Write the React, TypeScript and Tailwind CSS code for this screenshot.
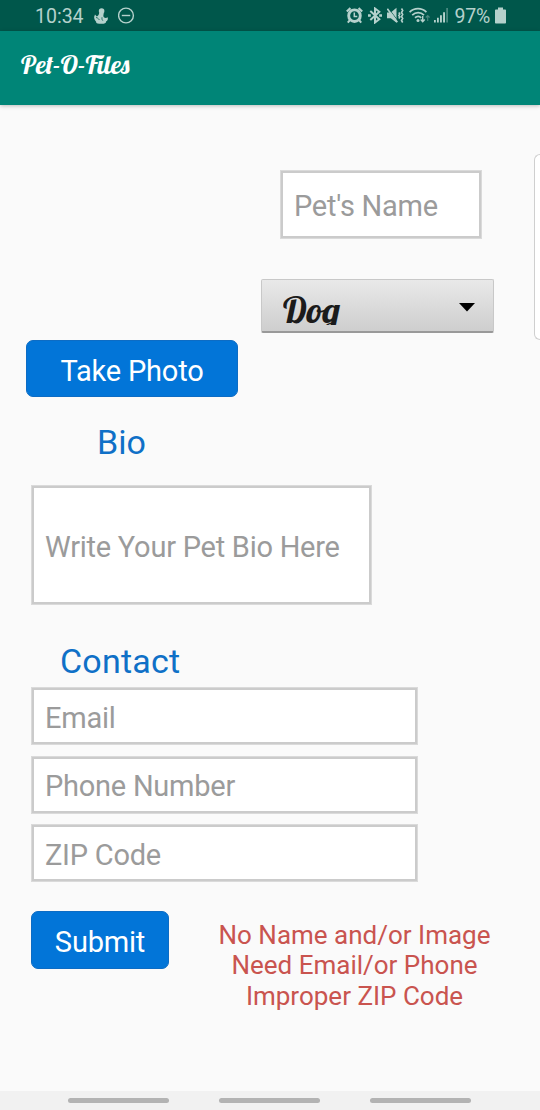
import type { ReactNode } from "react";

const script = "[font-family:Lobster,'Liberation_Serif',serif]";

function Field({ className, children }: { className: string; children: ReactNode }) {
  return (
    <div className={`flex items-center border border-[#dadada] bg-white pl-[13px] pt-[4px] text-[#9b9b9b] shadow-[inset_0_0_0_2px_#cbcbcb] ${className}`}>
      <span className="whitespace-nowrap text-[29px] leading-none tracking-[-0.25px]">{children}</span>
    </div>
  );
}

function StatusBar() {
  return (
    <header className="flex h-[31px] shrink-0 items-center bg-[#00574b] pl-[35px] text-[#b5d1cc]">
      <span className="w-[49px] pt-[2px] text-[19.5px] leading-none whitespace-nowrap">10:34</span>
      <svg className="ml-[10px]" width="14" height="16" viewBox="0 0 14 16" fill="currentColor">
        <circle cx="7.6" cy="3" r="2.8" />
        <path d="M5.200 4.500h4.400c.3 1.500-.4 2.700-.2 3.800.5 1.700 2.600 2.300 4.300.9.500 2-.2 3.400-1.500 4.100 0 2-1.600 2.500-4.600 2.500-3.600 0-5.700-.4-5.500-2.100C.700 12.200.200 11 .100 9L1 6.600l1.800 1.900C3.700 8 5.200 6.900 5.200 4.500Z" />
        <path d="M2 9.500c1.700.2 2.300 1.200 3.400 2.300M8 9.300c-.2 1.700.1 2.700.9 3.400" fill="none" stroke="#00574b" strokeWidth=".8" />
      </svg>
      <svg className="ml-[10px]" width="17" height="17" viewBox="0 0 17 17" fill="none" stroke="currentColor" strokeWidth="1.4">
        <circle cx="8" cy="8.500" r="7.400" />
        <path d="M3.800 8.500h8.400" />
      </svg>
      <div className="ml-[210.5px] flex items-center">
        <svg width="17" height="17" viewBox="0 0 17 17" fill="none" stroke="currentColor">
          <circle cx="8.500" cy="8.700" r="5.800" strokeWidth="2.900" />
          <path d="M8.300 5.500v3.900h3" strokeWidth="1.500" />
          <path d="M.8 4.500 4.500 1.100M16.200 4.500 12.500 1.100" strokeWidth="2.200" />
          <path d="m4 13-2.200 2.700M13 13l2.200 2.700" strokeWidth="2" />
        </svg>
        <svg className="ml-[5px]" width="14" height="17" viewBox="0 0 14 17" fill="none" stroke="currentColor" strokeWidth="2">
          <path d="m2.300 4 9 8.200-4.300 3.300V1.500l4.300 3.300-9 8.200" />
          <path d="M0 8.500h2.800M11.200 8.500H14" strokeWidth="2.600" />
        </svg>
        <svg className="ml-[5px]" width="17" height="17" viewBox="0 0 17 17" fill="none" stroke="currentColor">
          <path d="M0 5.500h3.800L9.500.8v15L3.800 11.200H0Z" fill="currentColor" stroke="none" />
          <path d="m1.500 1.300 9 12" stroke="#00574b" strokeWidth=".8" />
          <path d="m.3 1.800 10 13.500" strokeWidth="1.700" />
          <path d="m11.800 5.500 1 1.500-1 1.500 1 1.500-1 1.500M14.500 1.500l1.200 2-1.200 2 1.200 2-1.200 2 1.200 2-1.200 2 1.200 2" strokeWidth="1.600" />
        </svg>
        <svg className="ml-[5px]" width="22" height="17" viewBox="0 0 22 17" fill="none" stroke="currentColor" strokeWidth="1.800">
          <path d="M.6 5.100c4.800-4.600 12-4.600 16.800 0M3.200 8.100c3.500-3.200 8.400-3.200 11.800 0M6 10.800c2-1.700 4.400-1.700 6.200 0" />
          <circle cx="9" cy="13.500" r="1.500" fill="currentColor" stroke="none" />
          <path d="M13.700 9v5.500m-2-2 2 2.300 2-2.300" strokeWidth="1.400" />
          <path d="M18.700 14V8.500m-1.900 2 1.900-2 1.900 2" strokeWidth="1.100" opacity=".4" />
        </svg>
        <svg className="ml-[3px]" width="15" height="17" viewBox="0 0 15 17" fill="currentColor">
          <path d="M0 13h1.800v2.500H0zM3 10.800h1.800v4.700H3zM6 8.300h1.900v7.200H6zM9.100 5.200h1.900v10.300H9.100z" />
          <path d="M12.200 1H14v14.500h-1.800z" opacity=".4" />
        </svg>
        <span className="ml-[6px] w-[37px] whitespace-nowrap pt-[2px] text-[19.5px] leading-none tracking-[-0.2px]">97%</span>
        <svg className="ml-[3px]" width="11" height="17" viewBox="0 0 11 17" fill="currentColor">
          <path d="M3 .5h5v2h2.200q.8 0 .8.800v12.400q0 .8-.8.800H.8q-.8 0-.8-.800V3.300q0-.800.800-.800H3z" />
        </svg>
      </div>
    </header>
  );
}

export default function App() {
  return (
    <div className="flex h-[1110px] w-[540px] flex-col overflow-hidden bg-[#fafafa] font-['Roboto',sans-serif]">
      <StatusBar />
      <div className="z-10 flex h-[74px] shrink-0 items-center bg-[#008577] pl-[21px] pb-[6px] text-white shadow-[0_1px_4px_rgba(0,0,0,0.25)]">
        <h1 className={`whitespace-nowrap text-[26px] leading-none ${script}`}>Pet-O-Files</h1>
      </div>

      <main className="flex grow flex-col">
        <div className="flex h-[235px] items-start justify-end">
          <div className="mt-[65px] flex w-[233px] flex-col">
            <Field className="ml-[19px] h-[69px] w-[202px]">Pet's Name</Field>
            <div className="mt-[40px] flex h-[54px] items-start justify-between rounded-[2px] border border-[#c8c8c8] border-b-2 border-b-[#999] bg-linear-to-b from-[#e9e9e9] to-[#cecece] pl-[21px] pr-[18px]">
              <span className={`mt-[10px] h-[35px] overflow-hidden pr-2 text-[36px] leading-[40px] text-[#1b1b1b] ${script}`}>Dog</span>
              <svg className="mt-[23px]" width="16" height="9" viewBox="0 0 16 9"><path d="M0 0h16L8 8.500Z" /></svg>
            </div>
          </div>
          <div className="mt-[49px] ml-[40px] h-[186px] w-[6px] rounded-l-[6px] border border-r-0 border-[#cfcfcf] bg-white" />
        </div>

        <button className="ml-[26px] flex h-[57px] w-[212px] items-center justify-center rounded-[7px] border border-[#0d6cc4] bg-[#0275d8] pt-[6px] text-[29px] leading-none tracking-[-0.2px] text-white">Take Photo</button>
        <h2 className="mt-[25px] ml-[97px] text-[34px] leading-[40px] text-[#0f70c7]">Bio</h2>
        <Field className="mt-[23px] ml-[31px] h-[120px] w-[341px]">Write Your Pet Bio Here</Field>
        <h2 className="mt-[36px] ml-[60px] text-[34px] leading-[40px] tracking-[0.2px] text-[#0f70c7]">Contact</h2>
        <div className="mt-[6px] ml-[31px] flex w-[387px] flex-col gap-[10.5px]">
          <Field className="h-[58px]">Email</Field>
          <Field className="h-[58px]">Phone Number</Field>
          <Field className="h-[58px]">ZIP Code</Field>
        </div>
        <div className="mt-[28.5px] ml-[31px] flex items-start">
          <button className="flex h-[58px] w-[138px] items-center justify-center rounded-[7px] border border-[#0d6cc4] bg-[#0275d8] pt-[5px] text-[29px] leading-none tracking-[-0.2px] text-white">Submit</button>
          <p className="mt-[9.5px] ml-[45.5px] w-[280px] whitespace-nowrap text-center text-[26px] leading-[30.4px] text-[#c9544f]">
            No Name and/or Image<br />Need Email/or Phone<br />Improper ZIP Code
          </p>
        </div>
      </main>

      <nav className="flex h-[19px] shrink-0 items-center justify-center gap-[50px] bg-[#f1f1f1] pr-[1px]">
        <span className="h-[5px] w-[101px] rounded-full bg-[#b3b3b3]" />
        <span className="h-[5px] w-[101px] rounded-full bg-[#b3b3b3]" />
        <span className="h-[5px] w-[101px] rounded-full bg-[#b3b3b3]" />
      </nav>
    </div>
  );
}
